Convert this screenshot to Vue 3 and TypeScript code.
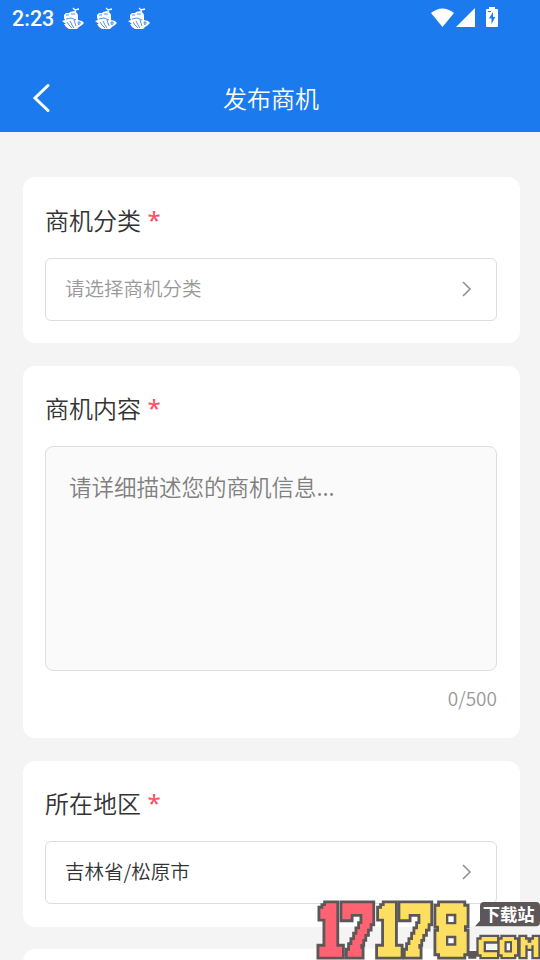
<script setup lang="ts">
import { ref } from 'vue'

const category = ref<string>('')
const content = ref<string>('')
const region = ref<string>('吉林省/松原市')
const maxLength = 500
const notifications: number[] = [1, 2, 3]
</script>

<template>
  <div class="page">
    <header class="header">
      <div class="status">
        <span class="clock">2:23</span>
        <svg v-for="n in notifications" :key="n" class="notice" viewBox="0 0 24 24">
          <path d="M3 8L5 6H8L9 5L13 4L16 6L17 8V13L21 14L23 16L21 18L18 20L16 22H8L5 20L3 17H5L1 14L4 13L3 11Z" fill="#fff" />
          <path d="M14.5 5L14 2M12 1L14 3L18 2" fill="none" stroke="#fff" stroke-width="1.4" />
          <path d="M5 8H8M10 7H14M5 12L10 11L15 13M6 15L8 18L11 21M9 14L11 18L13 21M13 13L15 19M17 15Q20 14 19 17Q17 19 17 15" fill="none" stroke="#1b7bee" stroke-width=".8" />
        </svg>
        <span class="spacer"></span>
        <svg class="signals" viewBox="0 0 68 24">
          <path d="M0 6Q11.5-3 23 6L11.5 20Z" fill="#fff" />
          <path d="M44 1V20H25Z" fill="#fff" />
          <path d="M58 0H64V2H66Q67 2 67 3V19Q67 20 66 20H56Q55 20 55 19V3Q55 2 56 2H58Z" fill="#fff" />
          <path d="M62 5L58 11.5H60.5V17L64.3 10H62ZM57 4H60V5H57Z" fill="#1b7bee" />
        </svg>
      </div>
      <nav class="nav">
        <svg class="back" viewBox="0 0 18 30"><path d="M16 2.5L3 15L16 27.5" /></svg>
        <h1>发布商机</h1>
      </nav>
    </header>

    <main class="form">
      <section class="card">
        <div class="label">商机分类<span class="required">*</span></div>
        <div class="select" :class="{ empty: !category }">
          <span>{{ category || '请选择商机分类' }}</span>
          <svg class="arrow" viewBox="0 0 10 16"><path d="M1 1L8 8L1 15" /></svg>
        </div>
      </section>

      <section class="card content-card">
        <div class="label">商机内容<span class="required">*</span></div>
        <textarea v-model="content" :maxlength="maxLength" placeholder="请详细描述您的商机信息..."></textarea>
        <div class="count">{{ content.length }}/{{ maxLength }}</div>
      </section>

      <section class="card">
        <div class="label">所在地区<span class="required">*</span></div>
        <div class="select">
          <span>{{ region }}</span>
          <svg class="arrow" viewBox="0 0 10 16"><path d="M1 1L8 8L1 15" /></svg>
        </div>
      </section>

      <section class="card"></section>
    </main>

    <svg class="watermark" viewBox="0 0 690 210">
      <defs>
        <path id="one" d="M48 40H79V170H96V200H28V170H46V86H31V56H40V48H48Z" />
        <path id="seven" d="M97 40H187V100H179V116H171V132H163V147H157V162H151V176H155V200H113V182H120V165H127V150H135V134H142V118H150V102H157V72H122V88H97Z" />
      </defs>
      <g class="outline">
        <use href="#one" /><use href="#seven" />
        <use href="#one" x="176" /><use href="#seven" x="174" />
        <path d="M390 40H460V50H470V106H462V125H470V190H460V200H390V190H379V125H387V107H379V50H390Z" />
      </g>
      <g fill="#ff6272"><use href="#one" /><use href="#seven" /></g>
      <g fill="#fcdf60">
        <use href="#one" x="176" /><use href="#seven" x="174" />
        <path d="M390 40H460V50H470V106H462V125H470V190H460V200H390V190H379V125H387V107H379V50H390Z" />
      </g>
      <path d="M408 71H439V103H408ZM408 137H439V167H408Z" fill="#5d5759" />
      <path d="M415 79H431V96H415ZM415 145H431V160H415Z" fill="#fff" />
      <path d="M510 48Q510 36 522 36H678Q690 36 690 48V97Q690 109 678 109H495L510 92Z" fill="#5d5759" />
      <text x="518" y="93" class="caption">下载站</text>
      <path class="domain-outline" d="M482 190H492V199H482ZM515 141H561V154H521V187H561V201H515V193H506V149H515ZM578 141H612V149H621V193H612V201H578V193H569V149H578ZM632 141H645V149H653V158H664V149H672V141H685V201H671V166H664V176H653V166H646V201H632Z" />
      <path fill="#fcdf60" fill-rule="evenodd" d="M515 141H561V154H521V187H561V201H515V193H506V149H515ZM578 141H612V149H621V193H612V201H578V193H569V149H578ZM584 154V187H606V154ZM632 141H645V149H653V158H664V149H672V141H685V201H671V166H664V176H653V166H646V201H632Z" />
      <path d="M584 154H606V187H584Z" fill="#5d5759" />
      <path d="M590 160H600V181H590ZM529 162H552V179H529Z" fill="#f4f4f4" />
    </svg>
  </div>
</template>

<style>
body {
  overflow: hidden;
}
</style>

<style scoped>
* {
  box-sizing: border-box;
}

.page {
  position: relative;
  height: 960px;
  overflow: hidden;
  background: #f4f4f4;
  color: #333;
  font-family: "Noto Sans CJK SC", sans-serif;
  font-weight: 350;
}

.header {
  height: 132px;
  background: #1b7bee;
  color: #fff;
}

.status {
  display: flex;
  align-items: center;
  height: 38px;
  padding: 0 41px 0 12px;
}

.clock {
  width: 49px;
  font: 500 21.5px/38px Roboto, sans-serif;
}

.notice {
  width: 24px;
  height: 24px;
  margin-right: 9px;
}

.spacer {
  flex: 1;
}

.signals {
  width: 68px;
  height: 24px;
  margin-top: -1px;
}

.nav {
  display: flex;
  align-items: center;
  height: 94px;
  padding: 26px 31px 0 32px;
}

.back {
  width: 18px;
  height: 30px;
}

.back path {
  fill: none;
  stroke: #fff;
  stroke-width: 3;
  stroke-linecap: round;
}

.nav h1 {
  flex: 1;
  margin: 0 17px 0 0;
  font-size: 24px;
  font-weight: inherit;
  line-height: 34px;
  text-align: center;
}

.form {
  display: flex;
  flex-direction: column;
  gap: 23px;
  padding: 45px 20px 0 23px;
}

.card {
  flex: none;
  height: 166px;
  padding: 26px 23px 0 22px;
  border-radius: 12px;
  background: #fff;
}

.content-card {
  height: 372px;
  padding-top: 25px;
}

.card:nth-child(n + 3) {
  padding-top: 25px;
}

.card:nth-child(4) {
  margin-top: -1px;
}

.label {
  height: 55px;
  font-size: 24px;
  line-height: 34px;
}

.required {
  margin-left: 6.5px;
  color: #ff4d5f;
  font-family: "Noto Sans", sans-serif;
  font-weight: 400;
  line-height: 1;
  vertical-align: 1px;
}

.select {
  display: flex;
  align-items: center;
  justify-content: space-between;
  height: 63px;
  padding: 0 24px 4px 19px;
  border: 1px solid #ddd;
  border-radius: 6px;
  font-size: 19.5px;
}

.empty {
  color: #999;
}

.arrow {
  width: 10px;
  height: 16px;
  margin-top: 3px;
}

.arrow path {
  fill: none;
  stroke: #909193;
  stroke-width: 1.6;
}

textarea {
  display: block;
  width: 452px;
  height: 225px;
  padding: 22px 23px;
  border: 1px solid #ddd;
  border-radius: 8px;
  outline: 0;
  resize: none;
  background: #fafafa;
  color: #333;
  font-family: inherit;
  font-size: 22.5px;
  font-weight: inherit;
  line-height: 34px;
}

textarea::placeholder {
  color: #808080;
}

.count {
  margin-top: 14px;
  color: #999;
  font-size: 19px;
  line-height: 26px;
  text-align: right;
}

.watermark {
  position: absolute;
  left: 310px;
  top: 890px;
  width: 230px;
  height: 70px;
}

.outline {
  fill: #5d5759;
  stroke: #5d5759;
  stroke-width: 17;
}

.domain-outline {
  fill: #5d5759;
  stroke: #5d5759;
  stroke-width: 14;
}

.caption {
  fill: #fff;
  font-size: 52px;
  font-weight: 700;
}
</style>
